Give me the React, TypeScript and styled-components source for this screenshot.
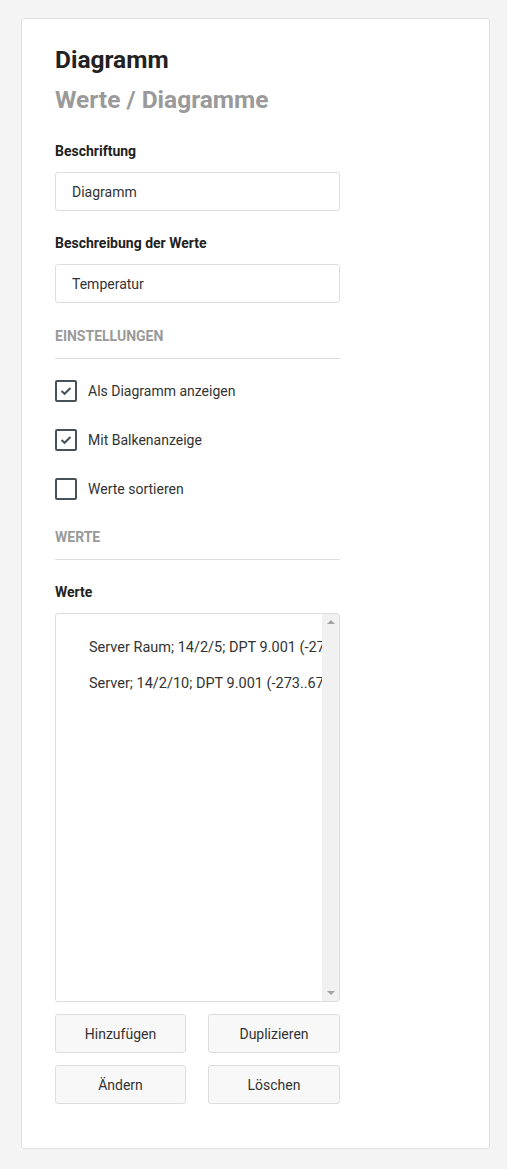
import React, { useState } from 'react'
import styled, { createGlobalStyle } from 'styled-components'

const GlobalStyle = createGlobalStyle`
  html, body {
    margin: 0;
    padding: 0;
    background: #f4f4f4;
    font-family: Roboto, "Liberation Sans", Arial, sans-serif;
    color: #222;
  }
`

const Page = styled.div`
  padding: 18px 17px 21px 21px;
`

const Card = styled.div`
  box-sizing: border-box;
  width: 469px;
  min-height: 1130px;
  background: #fff;
  border: 1px solid #e0e0e0;
  border-radius: 3px;
  padding: 21px 0 44px 33px;
`

const Column = styled.div`
  width: 285px;
  display: flex;
  flex-direction: column;
`

const Title = styled.h1`
  margin: 0;
  font-size: 24.5px;
  line-height: 40px;
  font-weight: 700;
  color: ${(p: { muted?: boolean }) => (p.muted ? '#9a9a9a' : '#222')};
`

const Label = styled.label`
  font-size: 14px;
  font-weight: 700;
  line-height: 20px;
  margin: ${(p: { top: number }) => p.top}px 0 11px;
`

const Input = styled.input`
  box-sizing: border-box;
  width: 285px;
  height: 39px;
  border: 1px solid #ddd;
  border-radius: 3px;
  padding: 0 16px;
  font: inherit;
  font-size: 14px;
  color: #333;
  outline: none;
`

const Section = styled.div`
  font-size: 14px;
  font-weight: 700;
  color: #9a9a9a;
  text-transform: uppercase;
  line-height: 20px;
  margin-top: ${(p: { top: number }) => p.top}px;
  padding-bottom: 12px;
  border-bottom: 1px solid #ddd;
`

const CheckList = styled.div`
  display: flex;
  flex-direction: column;
  gap: 27px;
  margin-top: 21px;
`

const CheckRow = styled.label`
  display: flex;
  align-items: center;
  gap: 11px;
  font-size: 14px;
  color: #333;
  cursor: pointer;
  user-select: none;
`

const Box = styled.span`
  box-sizing: border-box;
  width: 22px;
  height: 22px;
  border: 2px solid #45525c;
  border-radius: 2px;
  display: flex;
  align-items: center;
  justify-content: center;
`

const ListBox = styled.div`
  box-sizing: border-box;
  height: 389px;
  border: 1px solid #ddd;
  border-radius: 3px;
  display: flex;
  overflow: hidden;
`

const Items = styled.ul`
  flex: 1;
  min-width: 0;
  list-style: none;
  margin: 0;
  padding: 24px 0 0 33px;
  overflow: hidden;
`

const Item = styled.li`
  font-size: 14.5px;
  line-height: 20px;
  color: #333;
  white-space: nowrap;
  margin-bottom: 16px;
`

const Scrollbar = styled.div`
  width: 17px;
  flex: none;
  background: #f1f1f1;
  display: flex;
  flex-direction: column;
  justify-content: space-between;
  align-items: center;
  padding: 6px 0;
`

const Arrow = styled.span`
  width: 0;
  height: 0;
  border-left: 4px solid transparent;
  border-right: 4px solid transparent;
  ${(p: { down?: boolean }) =>
    p.down ? 'border-top: 4px solid #a3a3a3;' : 'border-bottom: 4px solid #a3a3a3;'}
`

const ButtonGrid = styled.div`
  display: grid;
  grid-template-columns: 131px 132px;
  justify-content: space-between;
  row-gap: 12px;
  margin-top: 12px;
`

const Button = styled.button`
  height: 39px;
  background: #f8f8f8;
  border: 1px solid #ddd;
  border-radius: 3px;
  font: inherit;
  font-size: 14px;
  color: #333;
  cursor: pointer;
`

const Check = () => (
  <svg width="12" height="10" viewBox="0 0 12 10">
    <path d="M1.5 5 L4.6 7.8 L10.5 2" fill="none" stroke="#45525c" strokeWidth="2" />
  </svg>
)

export default function App() {
  const [opts, setOpts] = useState([
    { label: 'Als Diagramm anzeigen', on: true },
    { label: 'Mit Balkenanzeige', on: true },
    { label: 'Werte sortieren', on: false },
  ])
  const toggle = (i: number) =>
    setOpts(opts.map((o, j) => (j === i ? { ...o, on: !o.on } : o)))

  return (
    <Page>
      <GlobalStyle />
      <Card>
        <Column>
          <Title>Diagramm</Title>
          <Title muted>Werte / Diagramme</Title>

          <Label top={21}>Beschriftung</Label>
          <Input defaultValue="Diagramm" />
          <Label top={22}>Beschreibung der Werte</Label>
          <Input defaultValue="Temperatur" />

          <Section top={23}>Einstellungen</Section>
          <CheckList>
            {opts.map((o, i) => (
              <CheckRow key={o.label} onClick={() => toggle(i)}>
                <Box>{o.on && <Check />}</Box>
                {o.label}
              </CheckRow>
            ))}
          </CheckList>

          <Section top={27}>Werte</Section>
          <Label top={22}>Werte</Label>
          <ListBox>
            <Items>
              <Item>Server Raum; 14/2/5; DPT 9.001 (-273..670760)</Item>
              <Item>Server; 14/2/10; DPT 9.001 (-273..670760)</Item>
            </Items>
            <Scrollbar>
              <Arrow />
              <Arrow down />
            </Scrollbar>
          </ListBox>

          <ButtonGrid>
            <Button>Hinzufügen</Button>
            <Button>Duplizieren</Button>
            <Button>Ändern</Button>
            <Button>Löschen</Button>
          </ButtonGrid>
        </Column>
      </Card>
    </Page>
  )
}
